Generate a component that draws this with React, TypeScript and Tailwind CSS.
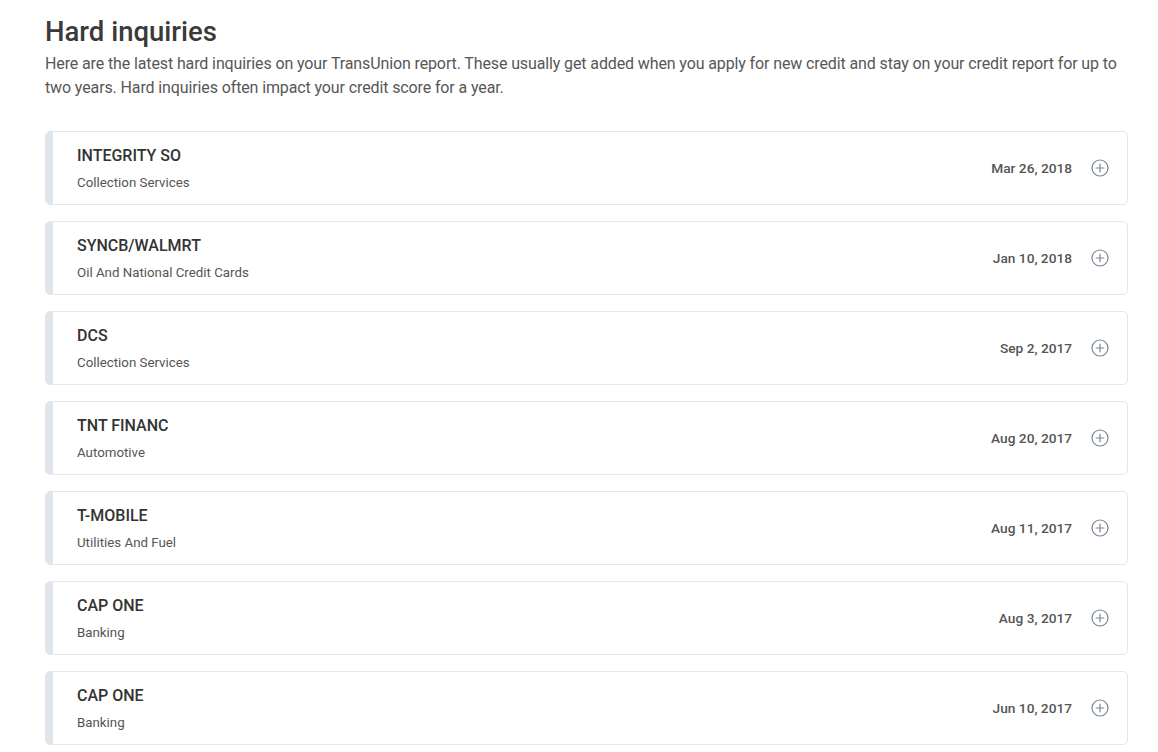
import React from 'react';

interface Inquiry {
    name: string;
    category: string;
    date: string;
}

const inquiries: Inquiry[] = [
    { name: 'INTEGRITY SO', category: 'Collection Services', date: 'Mar 26, 2018' },
    { name: 'SYNCB/WALMRT', category: 'Oil And National Credit Cards', date: 'Jan 10, 2018' },
    { name: 'DCS', category: 'Collection Services', date: 'Sep 2, 2017' },
    { name: 'TNT FINANC', category: 'Automotive', date: 'Aug 20, 2017' },
    { name: 'T-MOBILE', category: 'Utilities And Fuel', date: 'Aug 11, 2017' },
    { name: 'CAP ONE', category: 'Banking', date: 'Aug 3, 2017' },
    { name: 'CAP ONE', category: 'Banking', date: 'Jun 10, 2017' },
];

const PlusCircle = () => (
    <svg width="18" height="18" viewBox="0 0 18 18" fill="none" stroke="#7a8593" strokeWidth={1.2}>
        <circle cx="9" cy="9" r="8" />
        <path d="M9 5.2v7.6M5.2 9h7.6" strokeLinecap="round" />
    </svg>
);

const InquiryRow: React.FC<{ item: Inquiry }> = ({ item }) => (
    <div className="flex h-[74px] border border-[#e3e7ec] rounded-[5px] overflow-hidden bg-white">
        <div className="w-[7px] flex-shrink-0 bg-[#dfe5ec]" />
        <div className="flex-grow flex items-center pl-[24px] pr-[18px]">
            <div className="flex-grow pt-[2px]">
                <p className="text-[16px] leading-[20px] font-medium text-[#333333]">{item.name}</p>
                <p className="mt-[7px] text-[13.3px] leading-[20px] text-[#555555]">{item.category}</p>
            </div>
            <span className="text-[13.7px] font-medium text-[#555555]">{item.date}</span>
            <span className="ml-[19px] flex items-center"><PlusCircle /></span>
        </div>
    </div>
);

export default function App() {
    return (
        <div className="min-h-screen bg-white pl-[45px] pr-[30px] pt-[14px]" style={{ fontFamily: 'Roboto, "Liberation Sans", sans-serif' }}>
            <h1 className="text-[27.5px] leading-[36px] font-medium text-[#3a3a3a]">Hard inquiries</h1>
            <p className="mt-[2px] text-[16px] leading-[24px] tracking-[-0.12px] text-[#575757]">
                Here are the latest hard inquiries on your TransUnion report. These usually get added when you apply for new credit and stay on your credit report for up to two years. Hard inquiries often impact your credit score for a year.
            </p>
            {/* Inquiry list */}
            <div className="mt-[31px] flex flex-col gap-[16px]">
                {inquiries.map((item, i) => (
                    <InquiryRow key={i} item={item} />
                ))}
            </div>
        </div>
    );
}
